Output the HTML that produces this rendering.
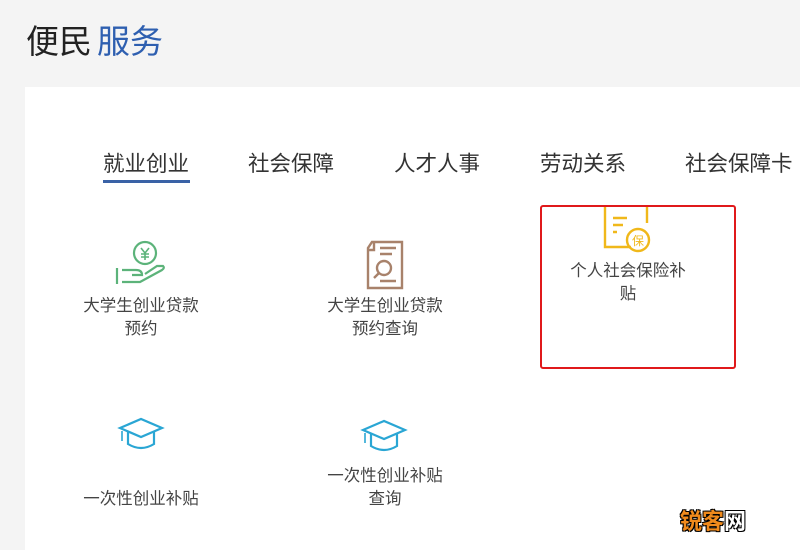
<!DOCTYPE html>
<html><head><meta charset="utf-8"><style>
body{margin:0;width:800px;height:550px;background:#f4f4f4;position:relative;overflow:hidden;font-family:"Liberation Sans","Noto Sans CJK SC",sans-serif;}
.t{position:absolute;white-space:nowrap;}
.panel{position:absolute;left:25px;top:87px;width:775px;height:463px;background:#fff;}
.tab{position:absolute;top:147px;font-size:21.5px;color:#333;white-space:nowrap;}
.lbl{position:absolute;font-size:16.5px;color:#444;text-align:center;line-height:23px;width:200px;}
svg{position:absolute;}
</style></head><body>
<div class="t" style="left:26px;top:15px;font-size:33px;color:#222;">便民<span style="color:#2e5fb0;margin-left:5px;">服务</span></div>
<div class="panel"></div>
<div class="tab" style="left:103px;">就业创业</div>
<div style="position:absolute;left:103px;top:180px;width:87px;height:3px;background:#3a62a6;"></div>
<div class="tab" style="left:248px;">社会保障</div>
<div class="tab" style="left:394px;">人才人事</div>
<div class="tab" style="left:540px;">劳动关系</div>
<div class="tab" style="left:685px;">社会保障卡</div>

<svg style="left:112px;top:238px" width="60" height="55" viewBox="0 0 60 55" fill="none" stroke="#5cb37a" stroke-width="2.2">
<circle cx="33" cy="15" r="11"/><path d="M29 10l4 5 4-5M33 15v7M29 16h8M29 19h8" stroke-width="1.6"/>
<path d="M5 30v16M10 32h14q6 0 6 5h-10M10 44h18l22-12q3-2 1-4h-6l-12 8"/>
</svg>
<div class="lbl" style="left:41px;top:295px;">大学生创业贷款<br>预约</div>

<svg style="left:360px;top:238px" width="50" height="55" viewBox="0 0 50 55" fill="none" stroke="#a8826b" stroke-width="2.4">
<path d="M12 4h30v46H8V10z"/><path d="M8 12h6V4"/>
<path d="M20 10h16M20 16h12"/><circle cx="24" cy="30" r="7"/><path d="M19 35l-5 5M20 43h16"/>
</svg>
<div class="lbl" style="left:285px;top:295px;">大学生创业贷款<br>预约查询</div>

<div style="position:absolute;left:540px;top:205px;width:192px;height:160px;border:2.5px solid #e0191b;border-radius:3px;"></div>
<svg style="left:600px;top:205px" width="60" height="50" viewBox="0 0 60 50" fill="none" stroke="#f0b81a" stroke-width="2.4">
<path d="M5 2v40h26M47 2v16"/><path d="M13 13h14M13 20h10M13 27h4"/>
<circle cx="38" cy="35" r="11"/><text x="32" y="40" font-size="12" fill="#f0b81a" stroke="none" font-family="Noto Sans CJK SC">保</text>
</svg>
<div class="lbl" style="left:528px;top:260px;">个人社会保险补<br>贴</div>

<svg style="left:114px;top:414px" width="55" height="42" viewBox="0 0 55 42" fill="none" stroke="#2aa6d4" stroke-width="2.2">
<path d="M6 14l21-9 21 9-21 9z"/><path d="M14 18v12q13 8 26 0V18"/><path d="M8 17v10" stroke-width="1.6"/>
</svg>
<div class="lbl" style="left:41px;top:488px;">一次性创业补贴</div>

<svg style="left:357px;top:416px" width="55" height="42" viewBox="0 0 55 42" fill="none" stroke="#2aa6d4" stroke-width="2.2">
<path d="M6 14l21-9 21 9-21 9z"/><path d="M14 18v12q13 8 26 0V18"/><path d="M8 17v10" stroke-width="1.6"/>
</svg>
<div class="lbl" style="left:285px;top:465px;">一次性创业补贴<br>查询</div>

<div class="t" style="left:680px;top:504px;font-size:22px;font-weight:bold;color:#f08a1c;text-shadow:-1px -1px 0 #000,1px -1px 0 #000,-1px 1px 0 #000,1px 1px 0 #000;">锐客<span style="color:#fff;">网</span></div>
</body></html>
